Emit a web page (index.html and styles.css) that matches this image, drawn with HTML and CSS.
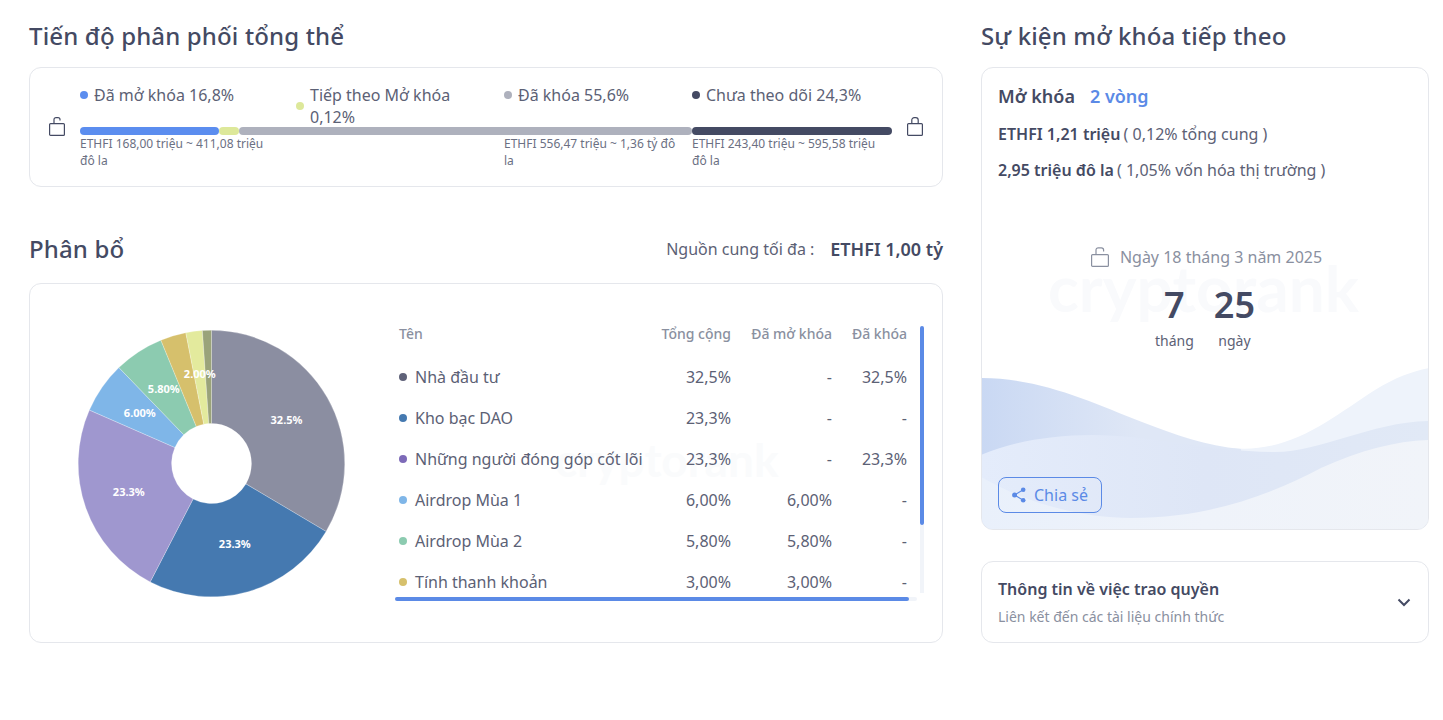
FILE: index.html
```html
<!DOCTYPE html>
<html lang="vi">
<head>
<meta charset="utf-8">
<title>Tiến độ phân phối</title>
<link rel="stylesheet" href="styles.css">
</head>
<body>
<main class="page">
  <section class="left">
    <h2 class="title">Tiến độ phân phối tổng thể</h2>
    <div class="card progress">
      <svg class="lock" viewBox="0 0 16 20" width="16" height="20" fill="none" stroke="#444a63" stroke-width="1.2"><rect x="0.6" y="6.6" width="14.8" height="11.8" rx="1"/><path d="M5 6.4V2.6a2 2 0 0 1 2-2h2a2 2 0 0 1 2 2v1"/></svg>
      <div class="track">
        <div class="legend"><i class="dot c-blue"></i><span>Đã mở khóa 16,8%</span></div>
        <div class="legend"><i class="dot c-lime"></i><span>Tiếp theo Mở khóa 0,12%</span></div>
        <div class="legend"><i class="dot c-gray"></i><span>Đã khóa 55,6%</span></div>
        <div class="legend"><i class="dot c-dark"></i><span>Chưa theo dõi 24,3%</span></div>
        <div class="bar">
          <i class="seg c-blue s1"></i><i class="seg c-lime s2"></i><i class="seg c-gray s3"></i><i class="seg c-dark s4"></i>
        </div>
        <p class="cap">ETHFI 168,00 triệu ~ 411,08 triệu đô la</p>
        <p class="cap"></p>
        <p class="cap">ETHFI 556,47 triệu ~ 1,36 tỷ đô la</p>
        <p class="cap">ETHFI 243,40 triệu ~ 595,58 triệu đô la</p>
      </div>
      <svg class="lock" viewBox="0 0 16 20" width="16" height="20" fill="none" stroke="#444a63" stroke-width="1.2"><rect x="0.6" y="6.6" width="14.8" height="11.8" rx="1"/><path d="M4.8 6.4V3a2.4 2.4 0 0 1 2.4-2.4h1.6A2.4 2.4 0 0 1 11.2 3v3.4"/></svg>
    </div>

    <div class="alloc-head">
      <h2 class="title">Phân bổ</h2>
      <p class="supply"><span>Nguồn cung tối đa :</span><b>ETHFI 1,00 tỷ</b></p>
    </div>
    <div class="card alloc">
      <svg class="pie" viewBox="-133.5 -133.5 267 267" width="267" height="267">
        <g stroke="#fff" stroke-width="0.25">
          <path fill="#8b8ea1" d="M0 -133.3A133.3 133.3 0 0 1 114.6 68L34.4 20.4A40 40 0 0 0 0 -40Z"/>
          <path fill="#4579b0" d="M114.6 68A133.3 133.3 0 0 1 -61.3 118.4L-18.4 35.5A40 40 0 0 0 34.4 20.4Z"/>
          <path fill="#9f97cf" d="M-61.3 118.4A133.3 133.3 0 0 1 -122.1 -53.4L-36.6 -16A40 40 0 0 0 -18.4 35.5Z"/>
          <path fill="#7fb6e8" d="M-122.1 -53.4A133.3 133.3 0 0 1 -92.6 -95.9L-27.8 -28.8A40 40 0 0 0 -36.6 -16Z"/>
          <path fill="#8ccbb0" d="M-92.6 -95.9A133.3 133.3 0 0 1 -50.6 -123.3L-15.2 -37A40 40 0 0 0 -27.8 -28.8Z"/>
          <path fill="#d6c06c" d="M-50.6 -123.3A133.3 133.3 0 0 1 -25.7 -130.8L-7.7 -39.2A40 40 0 0 0 -15.2 -37Z"/>
          <path fill="#e3ea9d" d="M-25.7 -130.8A133.3 133.3 0 0 1 -9.1 -133L-2.7 -39.9A40 40 0 0 0 -7.7 -39.2Z"/>
          <path fill="#9aa37a" d="M-9.1 -133A133.3 133.3 0 0 1 0 -133.3L0 -40A40 40 0 0 0 -2.7 -39.9Z"/>
        </g>
        <g class="pie-labels">
          <text x="75" y="-39.5">32.5%</text>
          <text x="23.3" y="84.5">23.3%</text>
          <text x="-82.7" y="32.5">23.3%</text>
          <text x="-71.7" y="-46.5">6.00%</text>
          <text x="-47.7" y="-70.5">5.80%</text>
          <text x="-11.7" y="-85.5">2.00%</text>
        </g>
      </svg>
      <div class="table-wrap">
        <span class="wm wm-table" aria-hidden="true">cryptorank</span>
        <div class="table">
          <div class="row head"><span>Tên</span><span>Tổng cộng</span><span>Đã mở khóa</span><span>Đã khóa</span></div>
          <div class="row"><span class="name"><i class="dot d1"></i>Nhà đầu tư</span><span>32,5%</span><span>-</span><span>32,5%</span></div>
          <div class="row"><span class="name"><i class="dot d2"></i>Kho bạc DAO</span><span>23,3%</span><span>-</span><span>-</span></div>
          <div class="row"><span class="name"><i class="dot d3"></i>Những người đóng góp cốt lõi</span><span>23,3%</span><span>-</span><span>23,3%</span></div>
          <div class="row"><span class="name"><i class="dot d4"></i>Airdrop Mùa 1</span><span>6,00%</span><span>6,00%</span><span>-</span></div>
          <div class="row"><span class="name"><i class="dot d5"></i>Airdrop Mùa 2</span><span>5,80%</span><span>5,80%</span><span>-</span></div>
          <div class="row"><span class="name"><i class="dot d6"></i>Tính thanh khoản</span><span>3,00%</span><span>3,00%</span><span>-</span></div>
        </div>
        <i class="sb-v-track"></i><i class="sb-v"></i>
        <i class="sb-h-track"></i><i class="sb-h"></i>
      </div>
    </div>
  </section>

  <aside class="right">
    <h2 class="title">Sự kiện mở khóa tiếp theo</h2>
    <div class="card event">
      <svg class="waves" viewBox="0 0 448 162" preserveAspectRatio="none">
        <defs>
          <linearGradient id="w1" x1="0" x2="1" y1="0" y2="0"><stop offset="0" stop-color="#c9d8f3"/><stop offset="0.6" stop-color="#dfe7f6"/></linearGradient>
          <linearGradient id="w3" x1="0" x2="1" y1="0" y2="0"><stop offset="0" stop-color="#e4ecfb"/><stop offset="0.5" stop-color="#dee6f6"/><stop offset="1" stop-color="#e1e9f6"/></linearGradient>
          <linearGradient id="w4" x1="0" x2="1" y1="0" y2="0"><stop offset="0" stop-color="#e9f0fb"/><stop offset="0.5" stop-color="#eff3fa"/><stop offset="1" stop-color="#f1f4f9"/></linearGradient>
        </defs>
        <path fill="#eef3fb" d="M250 80C310 86 350 50 394 22C415 9 432 3 448 0V162H250Z"/>
        <path fill="url(#w1)" d="M0 10C60 10 110 34 161 54C195 67 225 78 260 81V162H0Z"/>
        <path fill="url(#w3)" d="M0 87C30 74 70 67 111 67C170 67 230 84 294 84C340 84 390 54 448 53V162H0Z"/>
        <path fill="url(#w4)" d="M0 109C45 135 100 150 150 150C230 150 290 126 340 100C380 82 415 73 448 72V162H0Z"/>
      </svg>
      <span class="wm wm-event" aria-hidden="true">cryptorank</span>
      <p class="ev-head">Mở khóa<span class="rounds">2 vòng</span></p>
      <p class="ev-line"><b>ETHFI 1,21 triệu</b> ( 0,12% tổng cung )</p>
      <p class="ev-line"><b>2,95 triệu đô la</b> ( 1,05% vốn hóa thị trường )</p>
      <div class="date">
        <svg viewBox="0 0 18 20" width="18" height="20" fill="none" stroke="#8a90a0" stroke-width="1.2"><rect x="0.6" y="7.6" width="16.8" height="11.8" rx="1"/><path d="M5 7.4V3a2.2 2.2 0 0 1 2.2-2.2h3.2A2.2 2.2 0 0 1 12.6 3v1.5"/></svg>
        <span>Ngày 18 tháng 3 năm 2025</span>
      </div>
      <div class="count">
        <div class="unit"><b>7</b><span>tháng</span></div>
        <div class="unit"><b>25</b><span>ngày</span></div>
      </div>
      <button class="share" type="button">
        <svg viewBox="0 0 16 16" width="16" height="16" fill="#5b8ae6"><circle cx="12.2" cy="2.8" r="2.3"/><circle cx="3.6" cy="8" r="2.5"/><circle cx="12.2" cy="13.2" r="2.3"/><path d="M3.6 8L12.2 2.8M3.6 8l8.6 5.2" stroke="#5b8ae6" stroke-width="1.2" fill="none"/></svg>
        Chia sẻ
      </button>
    </div>
    <div class="card vest">
      <div>
        <p class="vest-title">Thông tin về việc trao quyền</p>
        <p class="vest-sub">Liên kết đến các tài liệu chính thức</p>
      </div>
      <svg viewBox="0 0 14 9" width="14" height="9" fill="none" stroke="#444a63" stroke-width="2"><path d="M1.5 1.5L7 7l5.5-5.5"/></svg>
    </div>
  </aside>
</main>
</body>
</html>
```
FILE: styles.css
```css
* { box-sizing: border-box; }
html, body { margin: 0; padding: 0; background: #fff; }
body { font-family: "Noto Sans", "Noto Sans CJK SC", sans-serif; color: #5c6175; overflow: hidden; }
p, h2 { margin: 0; }
i { display: block; }

.page { display: flex; gap: 38px; width: 1443px; height: 720px; padding: 20px 14px 0 29px; }
.left { width: 914px; flex: none; }
.right { width: 448px; flex: none; }

.title { font-size: 24px; line-height: 32px; font-weight: 500; letter-spacing: 0.15px; color: #444a63; margin-bottom: 15px; }
.card { position: relative; background: #fff; border: 1px solid #e5e7ec; border-radius: 12px; }

/* overall progress */
.progress { display: flex; align-items: center; gap: 15px; height: 120px; padding: 0 19px; }
.lock { flex: none; }
.track { display: grid; grid-template-columns: 216px 208px 188px 200px; width: 812px; align-self: flex-start; padding-top: 16px; }
.legend { display: flex; align-items: flex-start; gap: 6px; font-size: 16px; line-height: 22px; height: 44px; padding-right: 20px; color: #5c6175; }
.legend .dot { margin-top: 7px; }
.legend:nth-child(2) { align-items: center; }
.legend:nth-child(2) .dot { margin-top: 0; }
.dot { flex: none; width: 8px; height: 8px; border-radius: 50%; }
.c-blue { background: #5b8def; }
.c-lime { background: #dde89a; }
.c-gray { background: #aeb1bd; }
.c-dark { background: #444a63; }
.bar { grid-column: 1 / -1; display: flex; height: 8px; margin-top: -1px; }
.seg { height: 8px; border-radius: 4px; }
.s1 { width: 139px; }
.s2 { width: 20px; }
.s3 { width: 453px; }
.s4 { width: 200px; }
.cap { font-size: 12px; line-height: 17px; max-width: 184px; color: #6b7083; }

/* allocation */
.alloc-head { display: flex; justify-content: space-between; align-items: center; margin-top: 46px; margin-bottom: 18px; }
.alloc-head .title { margin: 0; }
.supply { display: flex; gap: 16px; align-items: center; font-size: 16px; line-height: 22px; }
.supply b { font-size: 18px; font-weight: 600; color: #444a63; }
.alloc { display: flex; gap: 50px; height: 360px; padding: 42px 0 0 48px; }
.pie { flex: none; margin-top: 4px; }
.pie-labels text { font-family: "Noto Sans", sans-serif; font-size: 11px; font-weight: 700; fill: #fff; text-anchor: middle; }
.table-wrap { position: relative; width: 530px; height: 275px; }
.table { position: relative; height: 271px; margin-top: -4px; padding: 4px 0 0 4px; overflow: hidden; }
.row { display: grid; grid-template-columns: 250px 82px 101px 75px; height: 41px; align-items: center; font-size: 16px; line-height: 20px; color: #5c6175; }
.row > span { text-align: right; white-space: nowrap; }
.row > .name, .row.head > span:first-child { display: flex; align-items: center; gap: 8px; text-align: left; }
.row.head { height: 30px; align-items: start; font-size: 14px; line-height: 16px; font-weight: 500; color: #8a90a0; }
.d1 { background: #5f6279; }
.d2 { background: #4579b0; }
.d3 { background: #7d6ab8; }
.d4 { background: #7fb6e8; }
.d5 { background: #8ccbb0; }
.d6 { background: #d6c06c; }
.sb-v-track { position: absolute; left: 525px; top: 199px; width: 4px; height: 68px; background: #f1f4f9; }
.sb-v { position: absolute; left: 525px; top: 0; width: 4px; height: 199px; border-radius: 2px; background: #5b8ae6; }
.sb-h-track { position: absolute; left: 0; top: 271px; width: 522px; height: 4px; background: #f1f4f9; border-radius: 2px; }
.sb-h { position: absolute; left: 0; top: 271px; width: 514px; height: 4px; background: #5b8ae6; border-radius: 2px; }
.wm { position: absolute; font-family: "Lato", sans-serif; font-weight: 700; white-space: nowrap; line-height: 1; }
.wm-table { left: 160px; top: 111px; font-size: 46px; color: #fafbfc; }
.wm-event { left: 66px; top: 188px; font-size: 64px; color: #f9fafc; }

/* event */
.event { height: 463px; padding: 15px 16px 16px; overflow: hidden; }
.waves { position: absolute; left: -1px; bottom: -1px; width: 448px; height: 162px; }
.ev-head, .ev-line, .date, .count, .share { position: relative; }
.ev-head { font-size: 18px; line-height: 26px; font-weight: 600; color: #444a63; }
.rounds { margin-left: 15px; color: #5b8ae6; }
.ev-line { font-size: 16px; line-height: 22px; margin-top: 14px; }
.ev-line b { font-weight: 600; color: #444a63; margin-right: -1px; }
.date { display: flex; justify-content: center; align-items: center; gap: 11px; margin-top: 65px; font-size: 16px; line-height: 22px; color: #8a90a0; padding-left: 3px; }
.count { display: flex; justify-content: center; gap: 20px; margin-top: 14px; }
.unit { display: flex; flex-direction: column; align-items: center; }
.unit b { font-size: 36px; line-height: 46px; font-weight: 600; color: #444a63; }
.unit span { font-size: 14px; line-height: 20px; margin-top: 3px; }
.share { position: absolute; left: 16px; bottom: 16px; display: flex; align-items: center; gap: 7px; width: 104px; height: 36px; padding: 0 0 0 12px; background: transparent; border: 1px solid #5b8ae6; border-radius: 8px; color: #5b8ae6; font: 400 16px/20px "Noto Sans", sans-serif; }

.vest { display: flex; align-items: center; justify-content: space-between; height: 82px; margin-top: 31px; padding: 0 17px 0 16px; }
.vest-title { font-size: 16px; line-height: 22px; font-weight: 600; color: #444a63; }
.vest-sub { font-size: 14px; line-height: 20px; margin-top: 7px; color: #8a90a0; }
```
